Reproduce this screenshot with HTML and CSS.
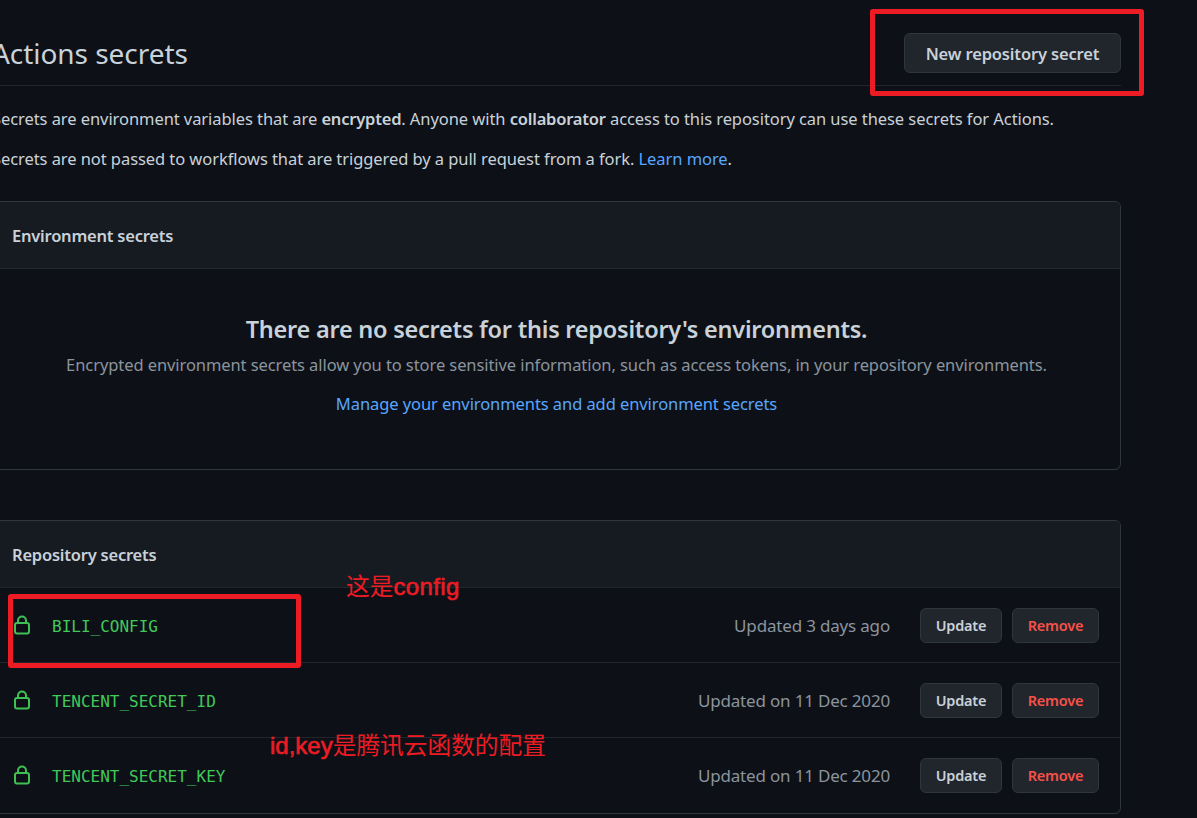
FILE: index.html
```html
<!DOCTYPE html>
<html lang="en">
<head>
<meta charset="utf-8">
<title>Actions secrets</title>
<link rel="stylesheet" href="styles.css">
</head>
<body>
<main class="page">
  <header class="head">
    <h2 class="title">Actions secrets</h2>
    <a class="btn btn-large">New repository secret</a>
  </header>
  <p class="note note-first">Secrets are environment variables that are <strong>encrypted</strong>. Anyone with <strong>collaborator</strong> access to this repository can use these secrets for Actions.</p>
  <p class="note note-second">Secrets are not passed to workflows that are triggered by a pull request from a fork. <a class="link">Learn more</a>.</p>

  <section class="box box-env">
    <h3 class="box-head">Environment secrets</h3>
    <div class="blank">
      <h3 class="blank-title">There are no secrets for this repository's environments.</h3>
      <p class="blank-text">Encrypted environment secrets allow you to store sensitive information, such as access tokens, in your repository environments.</p>
      <a class="link blank-link">Manage your environments and add environment secrets</a>
    </div>
  </section>

  <section class="box box-repo">
    <h3 class="box-head">Repository secrets</h3>
    <div class="row">
      <svg class="lock" viewBox="0 0 16 20" width="16" height="20"><rect x="1" y="8" width="14" height="10.500" rx="2"/><path d="M4 8V5.500a4 4 0 0 1 8 0V8"/></svg>
      <code class="name">BILI_CONFIG</code>
      <span class="time">Updated 3 days ago</span>
      <a class="btn btn-small">Update</a>
      <a class="btn btn-small btn-danger">Remove</a>
    </div>
    <div class="row">
      <svg class="lock" viewBox="0 0 16 20" width="16" height="20"><rect x="1" y="8" width="14" height="10.500" rx="2"/><path d="M4 8V5.500a4 4 0 0 1 8 0V8"/></svg>
      <code class="name">TENCENT_SECRET_ID</code>
      <span class="time">Updated on 11 Dec 2020</span>
      <a class="btn btn-small">Update</a>
      <a class="btn btn-small btn-danger">Remove</a>
    </div>
    <div class="row">
      <svg class="lock" viewBox="0 0 16 20" width="16" height="20"><rect x="1" y="8" width="14" height="10.500" rx="2"/><path d="M4 8V5.500a4 4 0 0 1 8 0V8"/></svg>
      <code class="name">TENCENT_SECRET_KEY</code>
      <span class="time">Updated on 11 Dec 2020</span>
      <a class="btn btn-small">Update</a>
      <a class="btn btn-small btn-danger">Remove</a>
    </div>
  </section>
</main>

<div class="mark mark-button"></div>
<div class="mark mark-config"></div>
<div class="remark remark-config">这是<b>config</b></div>
<div class="remark remark-key"><b>id,key</b>是腾讯云函数的配置</div>
</body>
</html>
```
FILE: styles.css
```css
* { box-sizing: border-box; }
html, body { margin: 0; height: 100%; }
body {
  position: relative;
  overflow: hidden;
  background: #0d1117;
  color: #c9d1d9;
  font-family: "Noto Sans", "Noto Sans CJK SC", sans-serif;
  font-size: 16px;
}
.page { width: 1129px; margin-left: -8px; }
.head {
  height: 86px;
  display: flex;
  align-items: center;
  justify-content: space-between;
  padding-top: 33px;
  padding-bottom: 12px;
  border-bottom: 1px solid #21262d;
}
.title { margin: 0; font-size: 28px; font-weight: 400; line-height: 36px; letter-spacing: -0.05px; }
.btn {
  display: flex;
  align-items: center;
  justify-content: center;
  background: #21262d;
  border: 1px solid #30363d;
  border-radius: 6px;
  color: #c9d1d9;
  font-weight: 600;
}
.btn-large { width: 217px; height: 40px; font-size: 16.5px; letter-spacing: -0.15px; }
.btn-small { width: 82px; height: 35px; font-size: 14.5px; letter-spacing: -0.2px; }
.btn-danger { width: 87px; margin-left: 10px; color: #f85149; }
.note { margin: 0; font-size: 16.5px; line-height: 24px; letter-spacing: -0.07px; white-space: nowrap; }
.note strong { font-weight: 600; letter-spacing: -0.2px; }
.note-first { padding-top: 21px; height: 46px; }
.note-second { padding-top: 15px; height: 33px; line-height: 24px; }
.link { color: #58a6ff; }
.box { border: 1px solid #30363d; border-radius: 6px; }
.box-env { margin-top: 36px; height: 269px; }
.box-repo { margin-top: 50px; height: 294px; }
.box-head {
  margin: 0;
  height: 67px;
  display: flex;
  align-items: center;
  padding-left: 19px;
  background: #161b22;
  border-bottom: 1px solid #21262d;
  border-radius: 6px 6px 0 0;
  font-size: 16.5px;
  font-weight: 600;
  letter-spacing: -0.22px;
}
.blank { text-align: center; padding-top: 42px; }
.blank-title { margin: 0; font-size: 23.5px; line-height: 36px; font-weight: 600; letter-spacing: -0.24px; }
.blank-text { margin: 6px 0 0; font-size: 16.5px; line-height: 24px; letter-spacing: -0.08px; color: #8b949e; white-space: nowrap; }
.blank-link { display: block; margin-top: 15px; font-size: 16.5px; line-height: 24px; letter-spacing: -0.08px; }
.row {
  height: 75px;
  display: flex;
  align-items: center;
  padding: 0 21px;
  border-bottom: 1px solid #21262d;
}
.row:last-child { border-bottom-color: transparent; }
.lock { fill: none; stroke: #3fc055; stroke-width: 2; flex: none; margin-top: -1px; }
.name { margin-left: 22px; margin-top: 3px; font-family: "DejaVu Sans Mono", monospace; font-size: 16px; color: #42c95a; flex: 1; }
.time { margin-right: 30px; font-size: 17px; letter-spacing: -0.18px; color: #8b949e; }
.mark { position: absolute; border: 5px solid #ed1c24; border-radius: 3px; }
.mark-button { left: 870px; top: 9px; width: 274px; height: 87px; }
.mark-config { left: 8px; top: 594px; width: 293px; height: 74px; }
.remark {
  position: absolute;
  color: #ed1c24;
  font-family: "Noto Sans CJK SC", sans-serif;
  font-size: 23.7px;
  line-height: 30px;
  white-space: nowrap;
}
.remark b { font-family: "Liberation Sans", sans-serif; font-size: 24px; font-weight: 400; letter-spacing: 0.4px; -webkit-text-stroke: 0.6px #ed1c24; }
.remark-key b { letter-spacing: 0; }
.remark-config { left: 346px; top: 570px; }
.remark-key { left: 270px; top: 729px; }
```
